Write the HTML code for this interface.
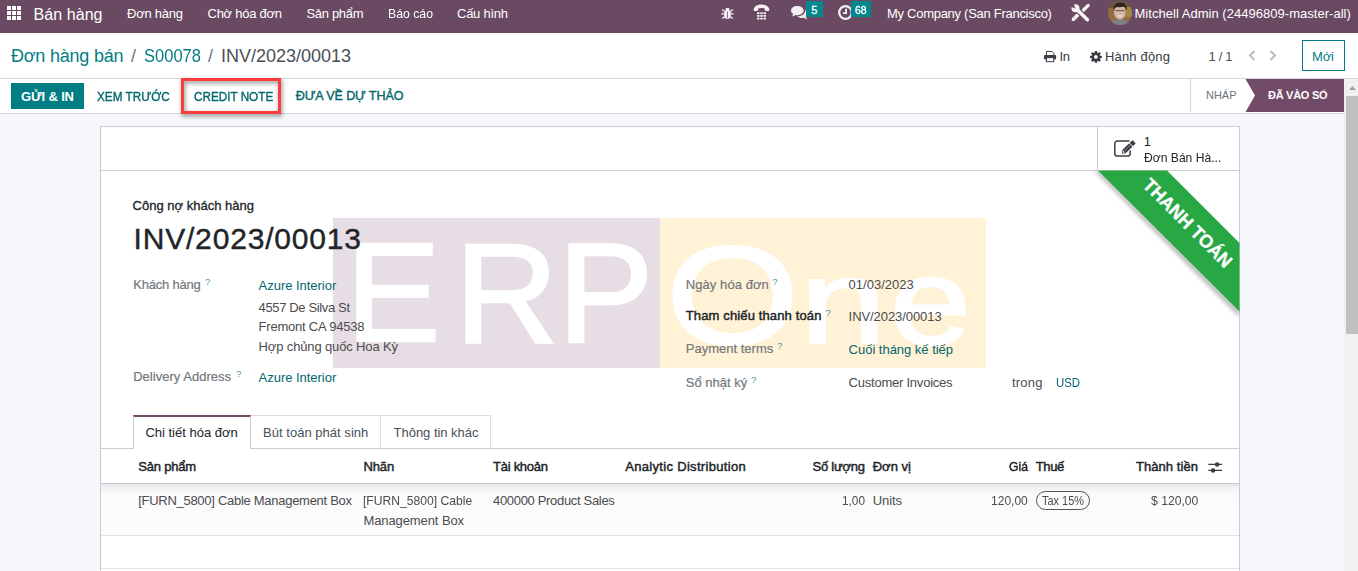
<!DOCTYPE html>
<html lang="vi"><head><meta charset="utf-8"><title>Odoo - INV/2023/00013</title>
<style>
*{box-sizing:border-box;margin:0;padding:0}
html,body{width:1358px;height:571px;overflow:hidden}
body{position:relative;background:#f6f7fa;font-family:"Liberation Sans",Arial,sans-serif;font-size:13px;color:#212529}
.a{position:absolute}
.t{position:absolute;white-space:nowrap;line-height:1;display:block}
svg{position:absolute;overflow:visible}
.nav{left:0;top:0;width:1358px;height:33px;background:#6a4a62}
.cp{left:0;top:33px;width:1358px;height:46px;background:#fff;border-bottom:1px solid #d5d7dc}
.sb{left:0;top:79px;width:1344px;height:35px;background:#fff;border-bottom:1px solid #d5d7dc}
.badge{background:#01878d;height:15.5px;top:1.2px}
.btnp{left:11px;top:83px;width:73px;height:25.5px;background:#017e84;border-radius:.5px}
.redbox{left:181px;top:78px;width:100px;height:35.5px;border:3px solid #fd3b3b;filter:drop-shadow(1px 2px 2px rgba(0,0,0,.5))}
.newbtn{left:1301.5px;top:40px;width:43px;height:30.5px;border:1px solid #017e84;border-radius:.5px;background:#fff}
.sheet{left:100px;top:126px;width:1140px;height:460px;background:#fff;border:1px solid #c9ccd2}
.bbox{left:101px;top:127px;width:1138px;height:43.5px;border-bottom:1px solid #c9ccd2}
.statb{left:1096.5px;top:127px;width:1px;height:43px;background:#c9ccd2}
.wm1{left:333px;top:218px;width:327px;height:149.5px;background:#e7dde5}
.wm2{left:660px;top:218px;width:326px;height:149.5px;background:#fff2d7}
.wl{position:absolute;color:#fff;-webkit-text-stroke:2.6px #fff;font-size:141px;line-height:1;white-space:nowrap;transform-origin:0 0}
.tabline{left:101px;top:448px;width:1138px;height:1px;background:#c9ccd2}
.tab{top:415px;height:33px;border:1px solid #dadde1;border-bottom:none;background:#fff}
.tab.act{top:415px;height:34px;border-top:2px solid #714B67;border-color:#c9ccd2;border-top-color:#714B67}
.hdr{left:101px;top:449px;width:1138px;height:35px;background:#fff;border-bottom:1px solid #c5c8ce}
.row{left:101px;top:484px;width:1138px;height:52px;background:linear-gradient(#e4e5e8 0,#eeeff1 3px,#f6f6f8 7px,#fbfbfc 12px,#fcfcfd 100%);border-bottom:1px solid #dfe1e5}
.l2{left:101px;top:568px;width:1138px;height:1px;background:#dfe1e5}
.taxb{left:1036px;top:491px;width:54px;height:19px;border:1px solid #555;border-radius:10px}
.sbar{left:1344px;top:79px;width:14px;height:492px;background:#f1f1f1}
.thumb{left:1346px;top:96px;width:12px;height:238px;background:#c1c1c1}
.ribbon{left:0;top:0}
</style></head><body>
<div class="a nav"></div>
<div class="a cp"></div>
<div class="a sb"></div>

<!-- navbar icons -->
<svg style="left:7px;top:6px" width="14" height="14" viewBox="0 0 14 14" fill="#fff"><rect x="0" y="0" width="4" height="4"/><rect x="5" y="0" width="4" height="4"/><rect x="10" y="0" width="4" height="4"/><rect x="0" y="5" width="4" height="4"/><rect x="5" y="5" width="4" height="4"/><rect x="10" y="5" width="4" height="4"/><rect x="0" y="10" width="4" height="4"/><rect x="5" y="10" width="4" height="4"/><rect x="10" y="10" width="4" height="4"/></svg>
<!-- bug -->
<svg style="left:721px;top:6.5px" width="13" height="12.5" viewBox="0 0 13 12.5"><g fill="#f3eef2" stroke="#f3eef2"><ellipse cx="6.5" cy="7.4" rx="3.4" ry="4.6" stroke="none"/><path d="M4.3 2.9a2.2 2.2 0 0 1 4.4 0z" stroke="none"/><path d="M0.4 6.9h12.2M1.2 2.6l2.6 2.2M11.8 2.6l-2.6 2.2M1.2 11.6l2.6-2.2M11.8 11.6l-2.6-2.2" stroke-width="1.3" fill="none"/></g><rect x="6.1" y="4.6" width=".8" height="6.6" fill="#7a4a8a"/></svg>
<!-- phone -->
<svg style="left:753px;top:4px" width="17" height="16" viewBox="0 0 17 16"><path d="M0.6 5.6C1 2.2 4.6 0.4 8.5 0.4s7.5 1.8 7.9 5.2c.1.9-.5 1.4-1.4 1.4h-2c-.8 0-1.2-.5-1.2-1.2V4.600c-1-.5-2.100-.7-3.300-.7s-2.300.2-3.300.7v1.200c0 .7-.4 1.200-1.200 1.200H2c-.9 0-1.500-.5-1.400-1.400z" fill="#f3eef2"/><g fill="#f3eef2"><rect x="4" y="8.300" width="2.500" height="1.800"/><rect x="7.250" y="8.300" width="2.500" height="1.800"/><rect x="10.500" y="8.300" width="2.500" height="1.800"/><rect x="4" y="11" width="2.500" height="1.800"/><rect x="7.250" y="11" width="2.500" height="1.800"/><rect x="10.500" y="11" width="2.500" height="1.800"/><rect x="4" y="13.700" width="2.500" height="1.800"/><rect x="7.250" y="13.700" width="2.500" height="1.800"/><rect x="10.500" y="13.700" width="2.500" height="1.800"/></g></svg>
<!-- comments -->
<svg style="left:790.5px;top:6px" width="17" height="14" viewBox="0 0 17 14" fill="#f3eef2"><path d="M6.300 0C2.800 0 0 2 0 4.600c0 1.400.9 2.700 2.200 3.500-.2.800-.7 1.600-1.400 2.300 1.400-.1 2.700-.6 3.700-1.400.6.100 1.200.2 1.800.2 3.500 0 6.300-2 6.300-4.600S9.800 0 6.300 0z"/><path d="M14.600 10.900c1.200-.8 2-1.900 2-3.200 0-1.500-1-2.800-2.600-3.600.1.200.1.400.1.600 0 3.100-3.300 5.500-7.400 5.500h-.5c1.100 1.100 3 1.800 5.100 1.800.6 0 1.200-.1 1.700-.2 1 .8 2.200 1.300 3.500 1.400-.700-.700-1.200-1.400-1.400-2.300z"/></svg>
<div class="a badge" style="left:806px;width:17.200px"></div>
<!-- clock -->
<svg style="left:837.750px;top:5.200px" width="15" height="15" viewBox="0 0 15 15"><circle cx="7.500" cy="7.500" r="6.300" fill="none" stroke="#f3eef2" stroke-width="2.300"/><path d="M8.100 3.800v4.400H4.900" fill="none" stroke="#f3eef2" stroke-width="1.800"/></svg>
<div class="a badge" style="left:850.750px;width:20px"></div>
<!-- tools -->
<svg style="left:1070.500px;top:3.700px" width="18.500" height="17.600" viewBox="0 0 18.500 17.600"><g stroke="#f6f2f5" fill="none"><path d="M17.200 1.400L12.600 6" stroke-width="3.300" stroke-linecap="round"/><path d="M7.800 9.900L3.600 14.100" stroke-width="3.500" stroke-linecap="butt"/><path d="M7 6.500L13 12.400" stroke-width="5.600" stroke="#6a4a62"/><path d="M5.500 5L16.400 15.700" stroke-width="3.500" stroke-linecap="round"/></g><path d="M0.600 17.300L1.200 13.600 2.400 12.900 4.800 15.300 4.200 16.500z" fill="#f6f2f5"/><circle cx="4.500" cy="4.200" r="4" fill="#f6f2f5"/><path d="M4.300 4.400L-1 2.600 2.600 -1z" fill="#6a4a62"/></svg>
<!-- avatar -->
<svg style="left:1107.800px;top:1px" width="24" height="24" viewBox="0 0 24 24"><defs><clipPath id="av"><circle cx="12" cy="12" r="12"/></clipPath></defs><g clip-path="url(#av)"><rect width="24" height="24" fill="#8f6f3e"/><rect x="0" y="0" width="24" height="7" fill="#6e5530"/><rect x="16" y="6" width="8" height="10" fill="#a58448"/><path d="M1 24c.500-3.500 4-5.800 10-5.800s10.500 2 11.500 5.800z" fill="#7b8086"/><ellipse cx="11.800" cy="11.400" rx="5.700" ry="7.300" fill="#d6b6a6"/><path d="M5.600 9.800C5 4.300 8 1.600 12.400 1.600c4.200 0 7 2.700 6.200 8.200-.6-2.200-1.400-3.400-2.800-4.200-2.400.8-5.400.9-7.600.4-1.400.9-2.200 2-2.600 3.800z" fill="#2b2420"/><path d="M7.200 9.700h9.400" stroke="#4a3c36" stroke-width=".8"/><path d="M9.200 14.600q2.800 2.400 5.600 0z" fill="#f4ebe6"/></g></svg>

<!-- control panel icons -->
<svg style="left:1043.800px;top:50.800px" width="12.200" height="11.200" viewBox="0 0 12.200 11.200"><path d="M2.400 4.200V0.500h5.600l1.800 1.800v1.900" fill="#fff" stroke="#3a3f47" stroke-width="1"/><rect x="0" y="3.900" width="12.200" height="4.500" rx="1.100" fill="#3a3f47"/><rect x="2.400" y="6.700" width="7.400" height="4" fill="#fff" stroke="#3a3f47" stroke-width="1"/></svg>
<svg style="left:1090.200px;top:50.600px" width="11.800" height="11.800" viewBox="-6 -6 12 12"><g fill="#343a40"><circle r="4.300"/><rect x="-1.250" y="-6" width="2.500" height="12" rx=".4"/><rect x="-1.250" y="-6" width="2.500" height="12" rx=".4" transform="rotate(45)"/><rect x="-1.250" y="-6" width="2.500" height="12" rx=".4" transform="rotate(90)"/><rect x="-1.250" y="-6" width="2.500" height="12" rx=".4" transform="rotate(135)"/></g><circle r="1.900" fill="#fff"/></svg>
<svg style="left:1247.500px;top:50px" width="8" height="11" viewBox="0 0 8 11"><path d="M6.500 1L2 5.500 6.500 10" fill="none" stroke="#b9bcc1" stroke-width="2"/></svg>
<svg style="left:1269px;top:50px" width="8" height="11" viewBox="0 0 8 11"><path d="M1.500 1L6 5.500 1.500 10" fill="none" stroke="#b9bcc1" stroke-width="2"/></svg>
<div class="a newbtn"></div>

<!-- status bar -->
<div class="a btnp"></div>
<div class="a redbox"></div>
<div class="a" style="left:1190px;top:79px;width:1px;height:33px;background:#d5d7dc"></div>
<svg style="left:1245px;top:79px" width="99" height="33" viewBox="0 0 99 33"><path d="M0.500 0H99V33H0.500L10 16.500z" fill="#714B67"/></svg>
<div class="a sbar"></div>
<div class="a thumb"></div>
<svg style="left:1349px;top:86px" width="7" height="4" viewBox="0 0 7 4"><path d="M0 4L3.500 0 7 4z" fill="#a3a3a3"/></svg>

<!-- sheet -->
<div class="a sheet"></div>
<div class="a bbox"></div>
<div class="a statb"></div>
<svg style="left:1113px;top:139px" width="24" height="19" viewBox="0 0 24 19"><path d="M16 1.900H4.400A2.600 2.600 0 0 0 1.800 4.500v9.900A2.600 2.600 0 0 0 4.400 17h10.200a2.600 2.600 0 0 0 2.600-2.600V12" fill="none" stroke="#3a3f47" stroke-width="1.500" stroke-linecap="round"/><g transform="translate(8.800 14.700) rotate(-44)" fill="#3a3f47"><path d="M0 0L3.200-2.300V2.300z"/><rect x="3.200" y="-2.300" width="9.300" height="4.600"/><rect x="13.200" y="-2.300" width="4" height="4.600" rx=".6"/><path d="M1.300 0L3-1.100V1.100z" fill="#fff"/><path d="M4 -0.200H12" stroke="#cfd2d6" stroke-width=".5"/></g></svg>

<div class="a wm1"></div><div class="a wm2"></div>
<span class="wl" style="left:346.4px;top:222.4px;transform:scale(1.003,1.004)">E</span>
<span class="wl" style="left:454.7px;top:222.3px;transform:scale(1.013,1.006)">R</span>
<span class="wl" style="left:558.1px;top:222.3px;transform:scale(1.014,1.006)">P</span>
<span class="wl" style="left:665.6px;top:226.1px;transform:scale(1.213,0.992)">O</span>
<span class="wl" style="left:800.2px;top:242.5px;transform:scale(1.101,0.838)">n</span>
<span class="wl" style="left:890.3px;top:241.4px;transform:scale(1.035,0.867)">e</span>

<!-- ribbon -->
<svg class="ribbon" width="1358" height="571" viewBox="0 0 1358 571"><defs><filter id="bl" x="-20%" y="-20%" width="140%" height="140%"><feGaussianBlur stdDeviation="2"/></filter><clipPath id="shc"><rect x="1060" y="171" width="179.500" height="200"/></clipPath></defs><g clip-path="url(#shc)"><path d="M1094 170.500L1100 170.500L1239.500 310L1239.500 317z" fill="#000" opacity=".3" filter="url(#bl)"/></g><path d="M1098 170.500H1167L1239.500 243V311.500z" fill="#28a745"/><text id="rib" transform="translate(1183.200 227.400) rotate(45)" text-anchor="middle" font-family="Liberation Sans, Arial, sans-serif" font-weight="700" font-size="18.500" fill="#fff" textLength="117" stroke="#fff" stroke-width=".3" lengthAdjust="spacingAndGlyphs">THANH TOÁN</text></svg>

<!-- tabs + table -->
<div class="a tabline"></div>
<div class="a tab" style="left:250px;width:131px"></div>
<div class="a tab" style="left:380px;width:111px"></div>
<div class="a tab act" style="left:133px;width:118px"></div>
<div class="a hdr"></div>
<div class="a row"></div>
<div class="a l2"></div>
<div class="a taxb"></div>
<svg style="left:1207.800px;top:462px" width="14" height="11" viewBox="0 0 14 11"><g stroke="#3a3f47" stroke-width="1.100"><path d="M0.300 2.400h13.800M0.300 8.400h13.800"/></g><circle cx="9.100" cy="2.400" r="2.250" fill="#3a3f47"/><circle cx="5.100" cy="8.400" r="2.250" fill="#3a3f47"/></svg>

<span class="t" id="t0" style="left:33.5px;top:6.7px;font-size:16px;color:#ffffff;letter-spacing:0.07px;">Bán hàng</span>
<span class="t" id="t1" style="left:127.0px;top:6.7px;font-size:13px;color:#ffffff;letter-spacing:-0.24px;">Đơn hàng</span>
<span class="t" id="t2" style="left:207.5px;top:6.7px;font-size:13px;color:#ffffff;letter-spacing:-0.25px;">Chờ hóa đơn</span>
<span class="t" id="t3" style="left:306.5px;top:6.7px;font-size:13px;color:#ffffff;letter-spacing:-0.32px;">Sản phẩm</span>
<span class="t" id="t4" style="left:388.0px;top:6.7px;font-size:13px;color:#ffffff;transform:scaleX(0.9433);transform-origin:0 50%;">Báo cáo</span>
<span class="t" id="t5" style="left:457.0px;top:6.7px;font-size:13px;color:#ffffff;letter-spacing:-0.25px;">Cấu hình</span>
<span class="t" id="t6" style="left:811.3px;top:5.0px;font-size:11px;color:#ffffff;-webkit-text-stroke:.3px;">5</span>
<span class="t" id="t7" style="left:855.0px;top:5.0px;font-size:11px;color:#ffffff;transform:scaleX(0.9551);transform-origin:0 50%;-webkit-text-stroke:.3px;">68</span>
<span class="t" id="t8" style="left:887.0px;top:6.7px;font-size:13px;color:#ffffff;letter-spacing:-0.28px;">My Company (San Francisco)</span>
<span class="t" id="t9" style="left:1134.5px;top:6.7px;font-size:13px;color:#ffffff;letter-spacing:0.03px;">Mitchell Admin (24496809-master-all)</span>
<span class="t" id="t10" style="left:11.0px;top:47.1px;font-size:18px;color:#017e84;letter-spacing:-0.22px;">Đơn hàng bán</span>
<span class="t" id="t11" style="left:131.0px;top:47.1px;font-size:18px;color:#6c757d;">/</span>
<span class="t" id="t12" style="left:143.5px;top:47.1px;font-size:18px;color:#017e84;transform:scaleX(0.9184);transform-origin:0 50%;">S00078</span>
<span class="t" id="t13" style="left:208.0px;top:47.1px;font-size:18px;color:#6c757d;">/</span>
<span class="t" id="t14" style="left:221.0px;top:47.1px;font-size:18px;color:#495057;letter-spacing:-0.01px;">INV/2023/00013</span>
<span class="t" id="t15" style="left:1059.5px;top:50.0px;font-size:13px;color:#343a40;letter-spacing:-0.34px;">In</span>
<span class="t" id="t16" style="left:1105.0px;top:50.0px;font-size:13px;color:#343a40;letter-spacing:0.17px;">Hành động</span>
<span class="t" id="t17" style="left:1208.5px;top:50.0px;font-size:13px;color:#495057;letter-spacing:-0.32px;">1 / 1</span>
<span class="t" id="t18" style="left:1312.0px;top:50.0px;font-size:13px;color:#017e84;letter-spacing:-0.12px;">Mới</span>
<span class="t" id="t19" style="left:21.0px;top:90.0px;font-size:13px;color:#ffffff;font-weight:700;letter-spacing:-0.16px;">GỬI &amp; IN</span>
<span class="t" id="t20" style="left:97.0px;top:90.6px;font-size:12.3px;color:#01666b;transform:scaleX(0.9544);transform-origin:0 50%;-webkit-text-stroke:.35px;">XEM TRƯỚC</span>
<span class="t" id="t21" style="left:193.8px;top:90.6px;font-size:12.3px;color:#01666b;transform:scaleX(0.9528);transform-origin:0 50%;-webkit-text-stroke:.35px;">CREDIT NOTE</span>
<span class="t" id="t22" style="left:295.8px;top:90.3px;font-size:12.6px;color:#01666b;letter-spacing:-0.14px;-webkit-text-stroke:.35px;">ĐƯA VỀ DỰ THẢO</span>
<span class="t" id="t23" style="left:1206.0px;top:90.4px;font-size:11px;color:#6c757d;letter-spacing:-0.02px;">NHÁP</span>
<span class="t" id="t24" style="left:1268.0px;top:90.4px;font-size:11px;color:#ffffff;font-weight:700;letter-spacing:-0.28px;">ĐÃ VÀO SỔ</span>
<span class="t" id="t25" style="left:1143.7px;top:135.2px;font-size:13px;color:#212529;">1</span>
<span class="t" id="t26" style="left:1143.7px;top:151.2px;font-size:13px;color:#212529;transform:scaleX(0.9319);transform-origin:0 50%;">Đơn Bán Hà...</span>
<span class="t" id="t27" style="left:132.5px;top:199.0px;font-size:13px;color:#212529;letter-spacing:0.01px;-webkit-text-stroke:.3px;">Công nợ khách hàng</span>
<span class="t" id="t28" style="left:133.5px;top:223.9px;font-size:30px;color:#212529;letter-spacing:0.82px;-webkit-text-stroke:.4px;">INV/2023/00013</span>
<span class="t" id="t29" style="left:133.2px;top:278.0px;font-size:13px;color:#74787d;letter-spacing:-0.21px;-webkit-text-stroke:.2px;">Khách hàng</span>
<span class="t" id="t30" style="left:205.0px;top:276.8px;font-size:9.5px;color:#3f979c;">?</span>
<span class="t" id="t31" style="left:258.6px;top:278.8px;font-size:13px;color:#01666b;letter-spacing:-0.03px;">Azure Interior</span>
<span class="t" id="t32" style="left:258.6px;top:301.0px;font-size:13px;color:#4c4c4c;letter-spacing:-0.36px;">4557 De Silva St</span>
<span class="t" id="t33" style="left:258.6px;top:320.0px;font-size:13px;color:#4c4c4c;letter-spacing:-0.22px;">Fremont CA 94538</span>
<span class="t" id="t34" style="left:258.6px;top:339.5px;font-size:13px;color:#4c4c4c;letter-spacing:-0.14px;">Hợp chủng quốc Hoa Kỳ</span>
<span class="t" id="t35" style="left:133.2px;top:370.0px;font-size:13px;color:#74787d;letter-spacing:0.02px;-webkit-text-stroke:.2px;">Delivery Address</span>
<span class="t" id="t36" style="left:236.0px;top:368.8px;font-size:9.5px;color:#3f979c;">?</span>
<span class="t" id="t37" style="left:258.6px;top:371.0px;font-size:13px;color:#01666b;letter-spacing:-0.03px;">Azure Interior</span>
<span class="t" id="t38" style="left:685.8px;top:277.5px;font-size:13px;color:#74787d;letter-spacing:0.07px;-webkit-text-stroke:.2px;">Ngày hóa đơn</span>
<span class="t" id="t39" style="left:772.3px;top:276.8px;font-size:9.5px;color:#3f979c;">?</span>
<span class="t" id="t40" style="left:848.6px;top:278.0px;font-size:13px;color:#4c4c4c;letter-spacing:0.01px;">01/03/2023</span>
<span class="t" id="t41" style="left:685.8px;top:308.5px;font-size:13px;color:#212529;letter-spacing:0.13px;-webkit-text-stroke:.45px;">Tham chiếu thanh toán</span>
<span class="t" id="t42" style="left:825.5px;top:307.8px;font-size:9.5px;color:#3f979c;">?</span>
<span class="t" id="t43" style="left:848.6px;top:309.7px;font-size:13px;color:#4c4c4c;letter-spacing:-0.07px;">INV/2023/00013</span>
<span class="t" id="t44" style="left:685.8px;top:341.7px;font-size:13px;color:#74787d;-webkit-text-stroke:.2px;">Payment terms</span>
<span class="t" id="t45" style="left:777.0px;top:340.8px;font-size:9.5px;color:#3f979c;">?</span>
<span class="t" id="t46" style="left:848.6px;top:342.7px;font-size:13px;color:#01666b;letter-spacing:-0.02px;">Cuối tháng kế tiếp</span>
<span class="t" id="t47" style="left:685.8px;top:375.6px;font-size:13px;color:#74787d;letter-spacing:0.01px;-webkit-text-stroke:.2px;">Sổ nhật ký</span>
<span class="t" id="t48" style="left:751.0px;top:374.8px;font-size:9.5px;color:#3f979c;">?</span>
<span class="t" id="t49" style="left:848.6px;top:375.6px;font-size:13px;color:#4c4c4c;letter-spacing:-0.23px;">Customer Invoices</span>
<span class="t" id="t50" style="left:1012.0px;top:375.6px;font-size:13px;color:#4c4c4c;letter-spacing:0.19px;">trong</span>
<span class="t" id="t51" style="left:1055.7px;top:377.2px;font-size:12.7px;color:#01666b;transform:scaleX(0.8994);transform-origin:0 50%;">USD</span>
<span class="t" id="t52" style="left:145.4px;top:426.4px;font-size:13px;color:#212529;">Chi tiết hóa đơn</span>
<span class="t" id="t53" style="left:263.0px;top:426.4px;font-size:13px;color:#495057;letter-spacing:0.03px;">Bút toán phát sinh</span>
<span class="t" id="t54" style="left:393.6px;top:426.4px;font-size:13px;color:#495057;letter-spacing:-0.03px;">Thông tin khác</span>
<span class="t" id="t55" style="left:138.2px;top:459.5px;font-size:13px;color:#212529;letter-spacing:-0.18px;-webkit-text-stroke:.45px;">Sản phẩm</span>
<span class="t" id="t56" style="left:363.4px;top:459.5px;font-size:13px;color:#212529;letter-spacing:-0.09px;-webkit-text-stroke:.45px;">Nhãn</span>
<span class="t" id="t57" style="left:493.0px;top:459.5px;font-size:13px;color:#212529;letter-spacing:-0.26px;-webkit-text-stroke:.45px;">Tài khoản</span>
<span class="t" id="t58" style="left:625.2px;top:459.5px;font-size:13px;color:#212529;letter-spacing:0.32px;-webkit-text-stroke:.45px;">Analytic Distribution</span>
<span class="t" id="t59" style="left:812.5px;top:459.5px;font-size:13px;color:#212529;letter-spacing:-0.23px;-webkit-text-stroke:.45px;">Số lượng</span>
<span class="t" id="t60" style="left:872.7px;top:459.5px;font-size:13px;color:#212529;letter-spacing:0.03px;-webkit-text-stroke:.45px;">Đơn vị</span>
<span class="t" id="t61" style="left:1009.0px;top:459.5px;font-size:13px;color:#212529;transform:scaleX(0.9390);transform-origin:0 50%;-webkit-text-stroke:.45px;">Giá</span>
<span class="t" id="t62" style="left:1035.8px;top:459.5px;font-size:13px;color:#212529;letter-spacing:-0.38px;-webkit-text-stroke:.45px;">Thuế</span>
<span class="t" id="t63" style="left:1136.0px;top:459.5px;font-size:13px;color:#212529;letter-spacing:0.06px;-webkit-text-stroke:.45px;">Thành tiền</span>
<span class="t" id="t64" style="left:138.2px;top:494.0px;font-size:13px;color:#4c4c4c;letter-spacing:-0.28px;">[FURN_5800] Cable Management Box</span>
<span class="t" id="t65" style="left:363.4px;top:494.0px;font-size:13px;color:#4c4c4c;transform:scaleX(0.9328);transform-origin:0 50%;">[FURN_5800] Cable</span>
<span class="t" id="t66" style="left:363.4px;top:514.0px;font-size:13px;color:#4c4c4c;letter-spacing:-0.09px;">Management Box</span>
<span class="t" id="t67" style="left:493.0px;top:494.0px;font-size:13px;color:#4c4c4c;letter-spacing:-0.32px;">400000 Product Sales</span>
<span class="t" id="t68" style="left:842.3px;top:494.0px;font-size:13px;color:#4c4c4c;transform:scaleX(0.9086);transform-origin:0 50%;">1,00</span>
<span class="t" id="t69" style="left:872.7px;top:494.0px;font-size:13px;color:#4c4c4c;letter-spacing:-0.08px;">Units</span>
<span class="t" id="t70" style="left:991.2px;top:494.0px;font-size:13px;color:#4c4c4c;transform:scaleX(0.9254);transform-origin:0 50%;">120,00</span>
<span class="t" id="t71" style="left:1042.0px;top:494.8px;font-size:12px;color:#4c4c4c;transform:scaleX(0.9124);transform-origin:0 50%;">Tax 15%</span>
<span class="t" id="t72" style="left:1150.6px;top:494.0px;font-size:13px;color:#4c4c4c;transform:scaleX(0.9366);transform-origin:0 50%;">$ 120,00</span>
</body></html>
